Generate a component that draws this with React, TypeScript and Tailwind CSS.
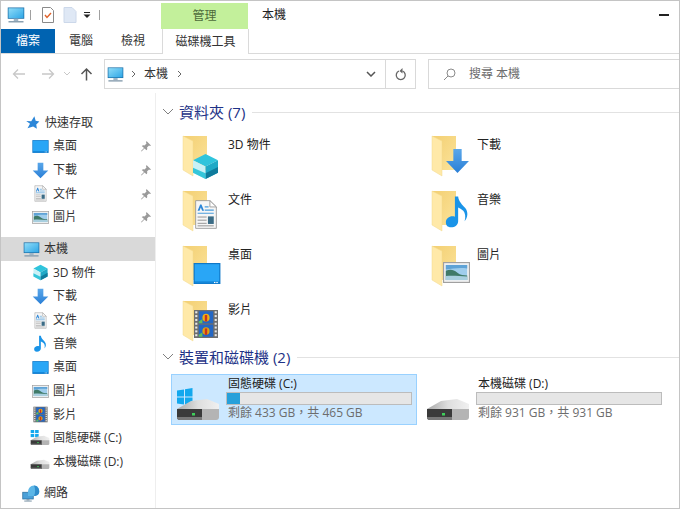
import React from "react";

function Sv({ s, w, h, vb = "0 0 24 24", className = "", children }: any) {
  return (
    <svg width={w ?? s} height={h ?? s} viewBox={vb} className={"shrink-0 " + className}>
      {children}
    </svg>
  );
}

const PC = () => (
  <g>
    <defs>
      <linearGradient id="pcg" x1="0" y1="0" x2="1" y2="1">
        <stop offset="0" stopColor="#8fdcf8" />
        <stop offset="1" stopColor="#2ea6e6" />
      </linearGradient>
    </defs>
    <rect x="1" y="2" width="22" height="15" fill="#1b6fa8" />
    <rect x="2" y="3" width="20" height="13" fill="url(#pcg)" />
    <rect x="9" y="17" width="6" height="3" fill="#9fb4c4" />
    <rect x="2" y="20" width="20" height="2" fill="#8aa0b0" />
  </g>
);
const Screen = () => (
  <g>
    <rect x="0.5" y="3" width="23" height="18" fill="#0f78c8" />
    <rect x="1.500" y="4" width="21" height="15" fill="#29a6f6" />
    <rect x="1.500" y="19" width="21" height="1.400" fill="#1486d8" />
    <rect x="18" y="19.200" width="1.200" height="1" fill="#fff" />
    <rect x="20" y="19.200" width="1.200" height="1" fill="#fff" />
  </g>
);
const Down = () => (
  <g>
    <defs>
      <linearGradient id="dg" x1="0" y1="0" x2="0" y2="1">
        <stop offset="0" stopColor="#5aa7ea" />
        <stop offset="1" stopColor="#2a7fd6" />
      </linearGradient>
    </defs>
    <path d="M8 1h8v11h7L12 23 1 12h7z" fill="url(#dg)" />
  </g>
);
const Doc = () => (
  <g>
    <path d="M4 1h11l5 5v17H4z" fill="#f6f6f6" stroke="#9a9a9a" strokeWidth=".7" />
    <path d="M15 1v5h5z" fill="#fff" stroke="#9a9a9a" strokeWidth=".7" />
    <path d="M5.500 9l2-5h1l2 5H9l-1-2.500L7 9z" fill="#2b86d8" />
    <path d="M11 6h3M11 8.500h7M5.500 11h12.500" stroke="#4a9ddc" strokeWidth=".9" />
    <path d="M5.500 14h7M5.500 16.500h7M5.500 19h7M5.500 21h12.500" stroke="#8a8a8a" strokeWidth=".7" />
    <rect x="13.500" y="13.500" width="4.500" height="6" fill="#3b6c86" />
  </g>
);
const Pic = () => (
  <g>
    <rect x="0.500" y="3.500" width="23" height="17" fill="#f2f2f2" stroke="#a0a0a0" />
    <rect x="2.500" y="5.500" width="19" height="13" fill="#9fcdec" />
    <path d="M2.500 5.500h19v3c-6-1-13 0-19 1z" fill="#5fa3d6" />
    <path d="M2.500 10.500c4-1.500 7-1 10 1.500s6 2.500 9 2.500v4h-19z" fill="#3f7a68" />
    <path d="M2.500 15c6-.5 12 0 19 .5v3h-19z" fill="#a8cfdf" />
  </g>
);
const Film = () => (
  <g>
    <rect x="2" y="1" width="20" height="22" fill="#6e6e6e" />
    <rect x="6" y="2" width="12" height="9.500" fill="#2467c4" />
    <rect x="6" y="12.500" width="12" height="9.500" fill="#2467c4" />
    <circle cx="12" cy="7" r="3" fill="#f0b010" />
    <circle cx="12" cy="17.500" r="3" fill="#e2a010" />
    <rect x="11" y="5" width="2" height="5" fill="#c8321e" />
    <rect x="11" y="15.500" width="2" height="5" fill="#c8321e" />
    <path d="M6 10l3-2v3.500H6zM6 20.500l3-2V22H6z" fill="#62c05a" />
    {[2, 5, 8, 11, 14, 17, 20].map((y) => (
      <g key={y}>
        <rect x="3" y={y} width="1.800" height="1.600" fill="#e8e8e8" />
        <rect x="19.200" y={y} width="1.800" height="1.600" fill="#e8e8e8" />
      </g>
    ))}
  </g>
);
const Cube = () => (
  <g>
    <path d="M12 1l10 5.500-10 5.500L2 6.500z" fill="#2fc4dc" />
    <path d="M2 6.500l10 5.500v11L2 17.500z" fill="#c9f1f6" />
    <path d="M22 6.500l-10 5.500v11l10-5.500z" fill="#1fa9c6" />
    <path d="M12 18l10-5.500v5L12 23z" fill="#0f7b9c" />
    <path d="M12 18L2 13v4.500L12 23z" fill="#35c6da" />
  </g>
);
const Note = () => (
  <path d="M10 1h2.500c.5 4 3 5.500 5.500 8.500 2.500 3 2 7-.5 9.500 1-3 .5-6-1-7.500-1-1-2.500-2-4-2.500V19c0 2.500-2.500 4.500-5.500 4.500S3 22 3 19.700 5.500 15.500 8 15.500c.8 0 1.500.1 2 .4z" fill="#1a94e8" />
);
const DriveBody = () => (
  <g>
    <defs>
      <linearGradient id="dtop" x1="0" y1="0" x2="1" y2="0">
        <stop offset="0" stopColor="#a8a8a8" />
        <stop offset=".5" stopColor="#dedede" />
        <stop offset="1" stopColor="#f0f0f0" />
      </linearGradient>
    </defs>
    <path d="M0 10L14 2 30 0l12 5v6H0z" fill="url(#dtop)" />
    <path d="M25 10h17v8a3 3 0 0 1-3 3H25z" fill="#b4b4b4" />
    <path d="M0 10h25v11H3a3 3 0 0 1-3-3z" fill="#3a3a3a" />
    <path d="M0 18h25v3H3a3 3 0 0 1-3-3z" fill="#777" />
    <rect x="15" y="14" width="3" height="2.500" fill="#3ecf5a" />
  </g>
);
const BigDrive = ({ win }: { win?: boolean }) => (
  <svg width="44" height="34" viewBox="0 0 44 34" className="mt-[13px] shrink-0 self-start">
    {win ? (
      <g fill="#12a8ee">
        <path d="M1 2.500l7-1V8.500H1z" />
        <path d="M9 1.300L16.500 0v8.500H9z" />
        <path d="M1 9.500h7v7l-7-1z" />
        <path d="M9 9.500h7.500V18L9 16.700z" />
      </g>
    ) : null}
    <g transform="translate(1 11)">
      <DriveBody />
    </g>
  </svg>
);
const SmallDrive = ({ win }: { win?: boolean }) => (
  <svg width="20" height="16" viewBox="0 0 44 36" className="shrink-0">
    {win && (
      <g fill="#12a8ee">
        <rect x="1" y="0" width="8" height="7" />
        <rect x="11" y="0" width="8" height="7" />
        <rect x="1" y="9" width="8" height="7" />
        <rect x="11" y="9" width="8" height="7" />
      </g>
    )}
    <g transform="translate(1 13)">
      <DriveBody />
    </g>
  </svg>
);
const Star = () => (
  <path d="M15 2l2 7 6 1.500-5 4.500 1 7-6-3.500L4 21l4-7-6-4.500 8 .5z" fill="#2b86d8" />
);
const Pin = () => (
  <path d="M13 2l9 9-2 1-2-1-4 4c1 2 .5 4-1 5.500L9 17l-6 6-1-1 6-6-4.500-4c1.500-1.500 3.500-2 5.500-1l4-4-1-2z" fill="#9a9a9a" />
);
const Net = () => (
  <g>
    <rect x="1" y="11" width="14" height="9" fill="#4aa0d8" stroke="#2a6f9e" />
    <rect x="6" y="20" width="4" height="2" fill="#8aa0b0" />
    <rect x="3" y="22" width="10" height="1.500" fill="#8aa0b0" />
    <path d="M8 11c0-5 3-9 8-9s7 4 7 8-3 6-8 6H8z" fill="#5cb6e6" />
    <path d="M16 2c4 0 7 4 7 8s-3 6-7 6c2-4 2-10 0-14z" fill="#2f8cca" />
  </g>
);

function Folder({ children }: { children: React.ReactNode }) {
  return (
    <svg width="40" height="48" viewBox="0 0 40 48" className="shrink-0">
      <defs>
        <linearGradient id="fb" x1="0" y1="0" x2="1" y2="1">
          <stop offset="0" stopColor="#f3cf72" />
          <stop offset="1" stopColor="#fbe39a" />
        </linearGradient>
      </defs>
      <path d="M1 3h24v34H11z" fill="url(#fb)" />
      <path d="M1 3l10 5v35l-10-6z" fill="#ffe9a8" />
      <path d="M1 3l10 5v35l-10-6z" fill="none" stroke="#f2d88c" strokeWidth=".5" />
      {children}
    </svg>
  );
}

function FolderItem({ name, children }: { name: string; children: React.ReactNode }) {
  return (
    <div className="flex h-[55px] items-start pl-[22px]">
      <Folder>{children}</Folder>
      <div className="ml-[6px] mt-[3px] text-[12px] leading-[18px] text-[#222]">{name}</div>
    </div>
  );
}

function NavRow({ label, icon, indent = "pl-[31px]", pin, active, gap = "gap-[5px]" }: any) {
  return (
    <div className={`flex h-[23.67px] items-center ${indent} ${gap} ${active ? "bg-[#d9d9d9]" : ""}`}>
      <div className="flex w-[16px] justify-center">{icon}</div>
      <span className="grow text-[12px] leading-none text-[#333]">{label}</span>
      {pin && (
        <span className="mr-[3px]">
          <Sv s={12}>
            <Pin />
          </Sv>
        </span>
      )}
    </div>
  );
}

const I = ({ c, s = 17 }: any) => <Sv s={s}>{c}</Sv>;

function SectionHead({ title }: { title: string }) {
  return (
    <div className="flex h-[22px] items-center">
      <svg width="12" height="8" viewBox="0 0 12 8" className="ml-[2px] mr-[5px] shrink-0">
        <path d="M1 1l5 5 5-5" fill="none" stroke="#808080" strokeWidth="1" />
      </svg>
      <span className="whitespace-nowrap text-[15px] leading-none text-[#1e3287]">{title}</span>
      <div className="ml-[7px] h-px grow bg-[#e2e2e2]" />
    </div>
  );
}

function Drive({ name, info, selected, fill, win }: any) {
  return (
    <div
      className={`flex h-[51px] w-[246px] items-start border pl-[4px] ${
        selected ? "border-[#99d1ff] bg-[#cce8ff]" : "border-transparent"
      }`}
    >
      <BigDrive win={win} />
      <div className="ml-[6px] flex w-[186px] flex-col pt-[1px]">
        <div className="pl-[2px] text-[12px] leading-[16px] text-[#222]">{name}</div>
        <div className="h-[13px] border border-[#bcbcbc] bg-[#e6e6e6]">
          <div className="h-full bg-[#26a0da]" style={{ width: `${fill}%` }} />
        </div>
        <div className="pl-[2px] text-[12px] leading-[16px] text-[#6d6d6d]">{info}</div>
      </div>
    </div>
  );
}

export default function App() {
  return (
    <div
      className="flex h-[509px] w-[680px] flex-col overflow-hidden border border-[#c4c4c4] bg-white"
      style={{ fontFamily: '"Open Sans","Noto Sans CJK TC",sans-serif' }}
    >
      {/* title row */}
      <div className="flex h-[28px] items-center">
        <div className="ml-[6px] flex items-center">
          <Sv s={18}>
            <PC />
          </Sv>
          <div className="ml-[5px] h-[10px] w-px bg-[#a0a0a0]" />
          <svg width="14" height="16" viewBox="0 0 14 16" className="ml-[10px]">
            <path d="M1.500.5h8l3 3v12h-11z" fill="#fff" stroke="#8a8a8a" />
            <path d="M4 8l2 2.500L10 6" fill="none" stroke="#e0622a" strokeWidth="1.400" />
          </svg>
          <svg width="14" height="16" viewBox="0 0 14 16" className="ml-[8px]">
            <path d="M1 .5h8l4 4v11H1z" fill="#dfe8f5" stroke="#ccd8ea" />
          </svg>
          <svg width="8" height="8" viewBox="0 0 8 8" className="ml-[6px]">
            <rect x="1" y="1" width="6" height="1" fill="#222" />
            <path d="M.5 3.500h7L4 7z" fill="#222" />
          </svg>
          <div className="ml-[8px] h-[10px] w-px bg-[#a0a0a0]" />
        </div>
        <div className="ml-[61px] flex h-[26px] w-[87px] items-center justify-center self-end bg-[#c3f09b] text-[12px] text-[#4d6a3a]">
          管理
        </div>
        <div className="ml-[14px] text-[12px] text-[#222]">本機</div>
        <div className="ml-auto mr-[10px] h-[1.500px] w-[10px] bg-[#222]" />
      </div>

      {/* ribbon tabs */}
      <div className="flex h-[25px] items-stretch border-b border-[#dadada] text-[12px] text-[#333]">
        <div className="flex w-[54px] items-center justify-center bg-[#0063b1] text-white">檔案</div>
        <div className="flex w-[52px] items-center justify-center">電腦</div>
        <div className="flex w-[52px] items-center justify-center">檢視</div>
        <div className="mb-[-1px] ml-[3px] flex w-[87px] items-center justify-center border-x border-[#dadada] bg-white">
          磁碟機工具
        </div>
      </div>

      {/* address row */}
      <div className="flex h-[39px] items-start pt-[5px]">
        <div className="flex h-[30px] w-[103px] items-center">
          <svg width="14" height="12" viewBox="0 0 14 12" className="ml-[11px]">
            <path d="M13 6H2M6 1.500L1.500 6 6 10.500" fill="none" stroke="#c8c8c8" strokeWidth="1.300" />
          </svg>
          <svg width="14" height="12" viewBox="0 0 14 12" className="ml-[15px]">
            <path d="M1 6h11M8 1.500L12.500 6 8 10.500" fill="none" stroke="#c8c8c8" strokeWidth="1.300" />
          </svg>
          <svg width="8" height="6" viewBox="0 0 8 6" className="ml-[8px]">
            <path d="M1 1l3 3 3-3" fill="none" stroke="#c8c8c8" />
          </svg>
          <svg width="13" height="14" viewBox="0 0 13 14" className="ml-[9px]">
            <path d="M6.500 13.500V2M1.500 7l5-5 5 5" fill="none" stroke="#555" strokeWidth="1.500" />
          </svg>
        </div>
        <div className="flex h-[30px] w-[312px] items-center border border-[#d9d9d9] pl-[2px]">
          <Sv s={17}>
            <PC />
          </Sv>
          <svg width="5" height="8" viewBox="0 0 5 8" className="ml-[7px]">
            <path d="M1 1l3 3-3 3" fill="none" stroke="#666" strokeWidth="1" />
          </svg>
          <span className="ml-[8px] text-[12px] text-[#333]">本機</span>
          <svg width="5" height="8" viewBox="0 0 5 8" className="ml-[9px]">
            <path d="M1 1l3 3-3 3" fill="none" stroke="#666" strokeWidth="1" />
          </svg>
          <svg width="10" height="6" viewBox="0 0 10 6" className="ml-auto mr-[9px]">
            <path d="M1 1l4 4 4-4" fill="none" stroke="#555" strokeWidth="1.500" />
          </svg>
          <div className="flex h-full w-[30px] items-center justify-center border-l border-[#d9d9d9]">
            <svg width="12" height="13" viewBox="0 0 12 13">
              <path d="M4 3a4.500 4.500 0 1 0 3.500 0" fill="none" stroke="#666" strokeWidth="1.300" />
              <path d="M7.500 0v5.500L4.500 3z" fill="#666" />
            </svg>
          </div>
        </div>
        <div className="ml-[12px] flex h-[30px] grow items-center border-y border-l border-[#d9d9d9] pl-[14px]">
          <svg width="13" height="13" viewBox="0 0 13 13">
            <circle cx="8" cy="5" r="4" fill="none" stroke="#8a8a8a" />
            <path d="M5 8l-4 4" stroke="#8a8a8a" />
          </svg>
          <span className="ml-[13px] text-[12px] text-[#6d6d6d]">搜尋 本機</span>
        </div>
      </div>

      {/* main */}
      <div className="flex min-h-0 grow">
        <div className="w-[155px] shrink-0 border-r border-[#eeeeee] pt-[18px]">
          <NavRow label="快速存取" indent="pl-[23px]" icon={<I c={<Star />} s={15} />} />
          <NavRow label="桌面" pin icon={<I c={<Screen />} />} />
          <NavRow label="下載" pin icon={<I c={<Down />} />} />
          <NavRow label="文件" pin icon={<I c={<Doc />} />} />
          <NavRow label="圖片" pin icon={<I c={<Pic />} />} />
          <div className="h-[8px]" />
          <NavRow label="本機" active indent="pl-[22px]" icon={<I c={<PC />} />} />
          <NavRow label="3D 物件" icon={<I c={<Cube />} />} />
          <NavRow label="下載" icon={<I c={<Down />} />} />
          <NavRow label="文件" icon={<I c={<Doc />} />} />
          <NavRow label="音樂" icon={<I c={<Note />} />} />
          <NavRow label="桌面" icon={<I c={<Screen />} />} />
          <NavRow label="圖片" icon={<I c={<Pic />} />} />
          <NavRow label="影片" icon={<I c={<Film />} />} />
          <NavRow label="固態硬碟 (C:)" icon={<SmallDrive win />} />
          <NavRow label="本機磁碟 (D:)" icon={<SmallDrive />} />
          <div className="h-[7px]" />
          <NavRow label="網路" indent="pl-[22px]" icon={<I c={<Net />} s={18} />} />
        </div>

        <div className="grow pl-[4px] pt-[8px]">
          <SectionHead title="資料夾 (7)" />
          <div className="mt-[10px] grid h-[213px] auto-rows-[55px] grid-cols-[249px_1fr]">
            <FolderItem name="3D 物件">
              <svg x="11" y="21" width="25" height="25" viewBox="2 1 20 22" preserveAspectRatio="none"><Cube /></svg>
            </FolderItem>
            <FolderItem name="下載">
              <svg x="14" y="15" width="25" height="26" viewBox="0 0 24 24" preserveAspectRatio="none"><Down /></svg>
            </FolderItem>
            <FolderItem name="文件">
              <svg x="13" y="12" width="22" height="29" viewBox="3.500 .5 17 23" preserveAspectRatio="none"><Doc /></svg>
            </FolderItem>
            <FolderItem name="音樂">
              <svg x="11" y="7" width="31" height="33" viewBox="0 0 24 24" preserveAspectRatio="none"><Note /></svg>
            </FolderItem>
            <FolderItem name="桌面">
              <svg x="11" y="20" width="28" height="21" viewBox="0 3 24 18" preserveAspectRatio="none"><Screen /></svg>
            </FolderItem>
            <FolderItem name="圖片">
              <svg x="12" y="19" width="27" height="21" viewBox="0 3 24 18" preserveAspectRatio="none"><Pic /></svg>
            </FolderItem>
            <FolderItem name="影片">
              <svg x="12" y="12" width="24" height="28" viewBox="2 1 20 22" preserveAspectRatio="none"><Film /></svg>
            </FolderItem>
          </div>
          <SectionHead title="裝置和磁碟機 (2)" />
          <div className="mt-[6px] flex pl-[11px] pr-[2px]">
            <Drive win selected name="固態硬碟 (C:)" info="剩餘 433 GB，共 465 GB" fill={7} />
            <div className="ml-[4px]">
              <Drive name="本機磁碟 (D:)" info="剩餘 931 GB，共 931 GB" fill={0} />
            </div>
          </div>
        </div>
      </div>
    </div>
  );
}
